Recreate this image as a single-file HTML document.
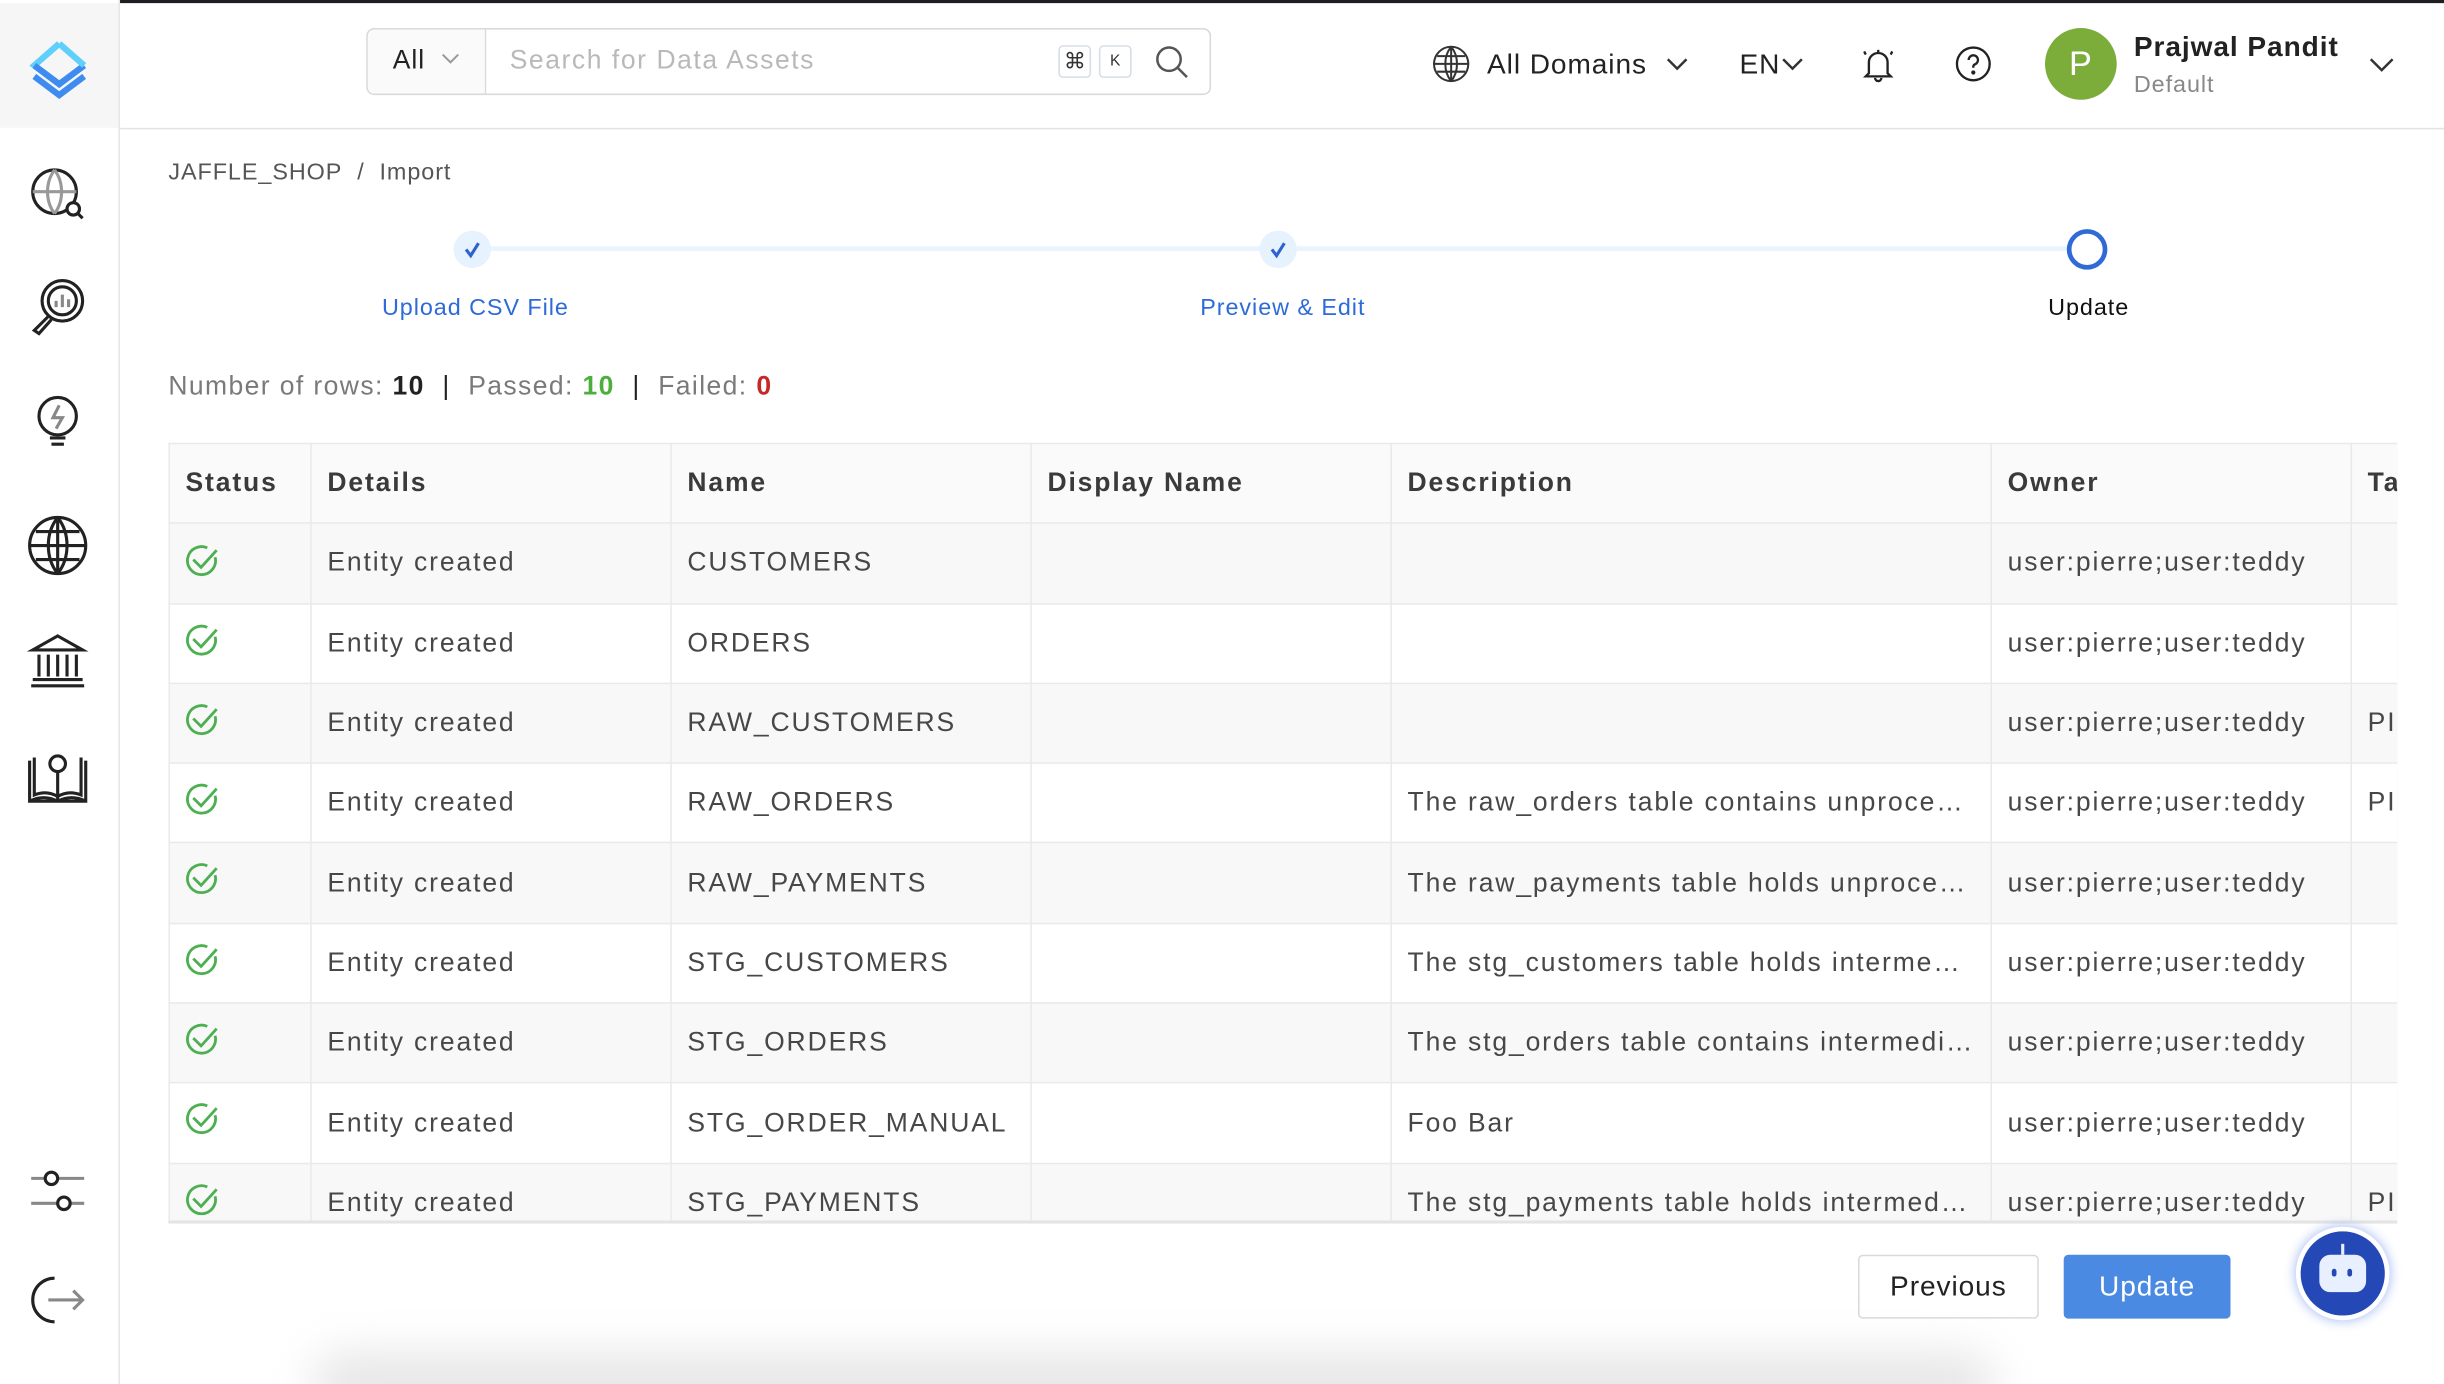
<!DOCTYPE html>
<html><head><meta charset="utf-8"><style>
*{box-sizing:border-box;margin:0;padding:0}
html,body{width:2444px;height:1384px;overflow:hidden;background:#fff;font-family:"Liberation Sans",sans-serif}
#w{position:absolute;left:0;top:0;width:1568px;height:888px;transform:scale(1.5587);transform-origin:0 0;background:#fff;overflow:hidden;letter-spacing:0.6px}
.a{position:absolute}
.sb{left:0;top:0;width:77px;height:888px;border-right:1px solid #e6e6e6;background:#fff}
.ic{position:absolute;left:17px;width:40px;height:40px}
table{border-collapse:collapse;position:absolute;left:108px;top:284px;width:1430px;table-layout:fixed;font-size:17px;color:#474747;letter-spacing:1.2px}
td,th{border:1px solid #e9e9e9;height:51.3px;padding:0 10px;white-space:nowrap;overflow:hidden;text-overflow:ellipsis;text-align:left}
td:last-child,th:last-child{text-overflow:clip}
th{font-weight:bold;color:#3a3a3a;background:#fafafa}
tr:nth-child(even) td{background:#f8f8f8}
.tw{position:absolute;left:108px;top:284px;width:1430px;height:501px;overflow:hidden;border-bottom:2px solid #e4e4e4}
td:first-child{color:transparent}
</style></head><body><div id="w">
<div class="a" style="left:0;top:0;width:1568px;height:2px;background:#1e1f23"></div>
<div class="a sb"></div>
<div class="a" style="left:0;top:2px;width:76px;height:80px;background:#f6f6f6"></div>
<svg class="a" style="left:16px;top:26px" width="44" height="40" viewBox="0 0 44 40"><path d="M22 2L6 16 22 28" fill="none" stroke="#5fd0fb" stroke-width="4"/><path d="M6 16l16 12 16-12M6 23l16 12 16-12" fill="none" stroke="#3f8cf0" stroke-width="4"/><path d="M22 2l16 14" stroke="#5fd0fb" stroke-width="4"/></svg>
<div class="a" style="left:76px;top:82px;width:1492px;height:1px;background:#e3e3e3"></div>
<svg class="ic" style="top:105px" viewBox="0 0 40 40" fill="none" stroke="#222" stroke-width="2"><circle cx="18" cy="18" r="14"/><path d="M4 18h28M18 4c-6 8-6 20 0 28M18 4c6 8 6 20 0 28" stroke="#999"/><circle cx="30" cy="29" r="4" fill="#fff"/><path d="M33 32l3 3"/></svg>
<svg class="ic" style="top:176px" viewBox="0 0 40 40" fill="none" stroke="#222" stroke-width="2"><circle cx="23" cy="17" r="13"/><circle cx="23" cy="17" r="9"/><path d="M19 21v-4M23 21v-8M27 21v-5" stroke="#888"/><path d="M14 27l-9 9 3 2 8-9"/></svg>
<svg class="ic" style="top:251px" viewBox="0 0 40 40" fill="none" stroke="#222" stroke-width="2"><circle cx="20" cy="16" r="12"/><path d="M21 9l-4 8h6l-4 7" stroke="#888"/><path d="M15 30h10M16 34h8"/></svg>
<svg class="ic" style="top:330px" viewBox="0 0 40 40" fill="none" stroke="#222" stroke-width="2"><circle cx="20" cy="20" r="18"/><path d="M2 20h36M20 2v36M6 11h28M6 29h28M20 2c-8 10-8 26 0 36M20 2c8 10 8 26 0 36"/></svg>
<svg class="ic" style="top:403px" viewBox="0 0 40 40" fill="none" stroke="#222" stroke-width="2"><path d="M4 14L20 5l16 9zM6 14h28M8 17v14M14 17v14M20 17v14M26 17v14M32 17v14M4 33h32M3 37h34"/></svg>
<svg class="ic" style="top:478px" viewBox="0 0 40 40" fill="none" stroke="#222" stroke-width="2"><path d="M2 10v26h36V10M2 36c6-3 12-3 18 0 6-3 12-3 18 0M20 12v24M5 8v24c5-2 10-2 15 1 5-3 10-3 15-1V8"/><circle cx="20" cy="12" r="5" fill="#fff"/></svg>
<svg class="ic" style="top:744px" viewBox="0 0 40 40" fill="none" stroke="#222" stroke-width="2"><path d="M3 12h9M20 12h17M3 28h17M28 28h9" stroke="#888"/><circle cx="16" cy="12" r="4"/><circle cx="24" cy="28" r="4"/></svg>
<svg class="ic" style="top:814px" viewBox="0 0 40 40" fill="none" stroke="#222" stroke-width="2"><path d="M18 6a14 14 0 1 0 0 28"/><path d="M14 20h22M30 14l6 6-6 6" stroke="#888"/></svg>
<div class="a" style="left:235px;top:18px;width:542px;height:43px;border:1px solid #d9d9d9;border-radius:5px"></div>
<div class="a" style="left:236px;top:19px;width:76px;height:41px;background:#fafafa;border-right:1px solid #d9d9d9;border-radius:5px 0 0 5px"></div>
<div class="a" style="left:252px;top:29px;font-size:17px;color:#222">All</div>
<svg class="a" style="left:283px;top:34px" width="12" height="8"><path d="M1 1l5 5 5-5" fill="none" stroke="#999" stroke-width="1.3"/></svg>
<div class="a" style="left:327px;top:29px;font-size:17px;color:#b9b9b9;letter-spacing:1px">Search for Data Assets</div>
<div class="a" style="left:679px;top:29px;width:21px;height:21px;border:1px solid #d6dde6;border-radius:3px;font-size:14px;text-align:center;line-height:19px;color:#333;letter-spacing:0">⌘</div>
<div class="a" style="left:705px;top:29px;width:21px;height:21px;border:1px solid #d6dde6;border-radius:3px;font-size:10px;text-align:center;line-height:19px;color:#333;letter-spacing:0">K</div>
<svg class="a" style="left:741px;top:29px" width="22" height="22" fill="none" stroke="#555" stroke-width="1.6"><circle cx="9" cy="9" r="7.5"/><path d="M14.5 14.5l6 6"/></svg>
<svg class="a" style="left:919px;top:29px" width="24" height="24" fill="none" stroke="#333" stroke-width="1.3"><circle cx="12" cy="12" r="11"/><path d="M1 12h22M12 1v22M3 7h18M3 17h18M12 1c-5 6-5 16 0 22M12 1c5 6 5 16 0 22"/></svg>
<div class="a" style="left:954px;top:31px;font-size:18px;color:#222">All Domains</div>
<svg class="a" style="left:1069px;top:37px" width="14" height="9"><path d="M1 1l6 6 6-6" fill="none" stroke="#333" stroke-width="1.6"/></svg>
<div class="a" style="left:1116px;top:31px;font-size:18px;color:#222">EN</div>
<svg class="a" style="left:1143px;top:37px" width="14" height="9"><path d="M1 1l6 6 6-6" fill="none" stroke="#333" stroke-width="1.6"/></svg>
<svg class="a" style="left:1193px;top:29px" width="24" height="24" fill="none" stroke="#222" stroke-width="1.5"><path d="M6 18V11a6 6 0 0 1 12 0v7l2 2H4zM10 21a2 2 0 0 0 4 0M12 3v2M4 6l-1-2M20 6l1-2"/></svg>
<svg class="a" style="left:1254px;top:29px" width="24" height="24" fill="none" stroke="#222" stroke-width="1.5"><circle cx="12" cy="12" r="10.5"/><path d="M9 9.5a3 3 0 1 1 4 2.8c-1 .4-1 1-1 2.2"/><circle cx="12" cy="17.5" r=".6" fill="#222"/></svg>
<div class="a" style="left:1312px;top:18px;width:46px;height:46px;border-radius:50%;background:#7cad3b;color:#fff;font-size:22px;text-align:center;line-height:46px">P</div>
<div class="a" style="left:1369px;top:20px;font-size:18px;color:#222;font-weight:bold">Prajwal Pandit</div>
<div class="a" style="left:1369px;top:46px;font-size:15px;color:#888">Default</div>
<svg class="a" style="left:1520px;top:37px" width="16" height="10"><path d="M1 1l7 7 7-7" fill="none" stroke="#333" stroke-width="1.6"/></svg>
<div class="a" style="left:108px;top:102px;font-size:15px;color:#555">JAFFLE_SHOP&nbsp;&nbsp;/&nbsp;&nbsp;Import</div>
<div class="a" style="left:303px;top:158px;width:1036px;height:3px;background:#e8f4fe"></div>
<div class="a" style="left:291px;top:148px;width:24px;height:24px;border-radius:50%;background:#e6f2fe"></div>
<svg class="a" style="left:297px;top:154px" width="12" height="12"><path d="M2 6l3 4 5-8" fill="none" stroke="#2c63cf" stroke-width="2"/></svg>
<div class="a" style="left:808px;top:148px;width:24px;height:24px;border-radius:50%;background:#e6f2fe"></div>
<svg class="a" style="left:814px;top:154px" width="12" height="12"><path d="M2 6l3 4 5-8" fill="none" stroke="#2c63cf" stroke-width="2"/></svg>
<div class="a" style="left:1326px;top:147px;width:26px;height:26px;border-radius:50%;background:#fff;border:3px solid #2f6ad6"></div>
<div class="a" style="left:205px;top:189px;width:200px;text-align:center;font-size:15px;color:#2c6bd8">Upload CSV File</div>
<div class="a" style="left:723px;top:189px;width:200px;text-align:center;font-size:15px;color:#2c6bd8">Preview &amp; Edit</div>
<div class="a" style="left:1240px;top:189px;width:200px;text-align:center;font-size:15px;color:#111">Update</div>
<div class="a" style="left:108px;top:238px;font-size:17px;color:#7a7a7a;letter-spacing:0.9px">Number of rows: <b style="color:#222">10</b> &nbsp;<span style="color:#222">|</span>&nbsp; Passed: <b style="color:#4caf3c">10</b> &nbsp;<span style="color:#222">|</span>&nbsp; Failed: <b style="color:#c62828">0</b></div>
<div class="tw"><table style="left:0;top:0">
<colgroup><col style="width:91px"><col style="width:231px"><col style="width:231px"><col style="width:231px"><col style="width:385px"><col style="width:231px"><col style="width:30px"></colgroup>
<tr><th>Status</th><th>Details</th><th>Name</th><th>Display Name</th><th>Description</th><th>Owner</th><th>Tags</th></tr>
<tr><td>✓</td><td>Entity created</td><td>CUSTOMERS</td><td></td><td></td><td>user:pierre;user:teddy</td><td></td></tr>
<tr><td>✓</td><td>Entity created</td><td>ORDERS</td><td></td><td></td><td>user:pierre;user:teddy</td><td></td></tr>
<tr><td>✓</td><td>Entity created</td><td>RAW_CUSTOMERS</td><td></td><td></td><td>user:pierre;user:teddy</td><td>PII</td></tr>
<tr><td>✓</td><td>Entity created</td><td>RAW_ORDERS</td><td></td><td>The raw_orders table contains unprocessed</td><td>user:pierre;user:teddy</td><td>PII</td></tr>
<tr><td>✓</td><td>Entity created</td><td>RAW_PAYMENTS</td><td></td><td>The raw_payments table holds unprocessed</td><td>user:pierre;user:teddy</td><td></td></tr>
<tr><td>✓</td><td>Entity created</td><td>STG_CUSTOMERS</td><td></td><td>The stg_customers table holds intermediate</td><td>user:pierre;user:teddy</td><td></td></tr>
<tr><td>✓</td><td>Entity created</td><td>STG_ORDERS</td><td></td><td>The stg_orders table contains intermediate</td><td>user:pierre;user:teddy</td><td></td></tr>
<tr><td>✓</td><td>Entity created</td><td>STG_ORDER_MANUAL</td><td></td><td>Foo Bar</td><td>user:pierre;user:teddy</td><td></td></tr>
<tr><td>✓</td><td>Entity created</td><td>STG_PAYMENTS</td><td></td><td>The stg_payments table holds intermediate</td><td>user:pierre;user:teddy</td><td>PII</td></tr>
</table></div>
<svg class="a" style="left:119px;top:349px" width="22" height="440" fill="none" stroke="#4caf50" stroke-width="1.8">
<g id="c"><path d="M19 8.5A9 9 0 1 1 14 2.5"/><path d="M5 10l5 5 10-11"/></g>
<use href="#c" y="51"/><use href="#c" y="102"/><use href="#c" y="153"/><use href="#c" y="204"/><use href="#c" y="256"/><use href="#c" y="307"/><use href="#c" y="358"/><use href="#c" y="410"/></svg>
<div class="a" style="left:1192px;top:805px;width:116px;height:41px;border:1px solid #d9d9d9;border-radius:3px;font-size:18px;color:#222;text-align:center;line-height:39px">Previous</div>
<div class="a" style="left:1324px;top:805px;width:107px;height:41px;background:#4a8ae2;border-radius:3px;font-size:18px;color:#fff;text-align:center;line-height:41px">Update</div>
<div class="a" style="left:1473px;top:787px;width:60px;height:60px;border-radius:50%;background:#2448b6;border:3px solid #fff;box-shadow:0 0 8px #9bb4f0"></div>
<div class="a" style="left:1488px;top:805px;width:30px;height:24px;border-radius:7px;background:#e8f0ff"></div>
<div class="a" style="left:1496px;top:814px;width:3px;height:5px;background:#2448b6;border-radius:2px"></div>
<div class="a" style="left:1506px;top:814px;width:3px;height:5px;background:#2448b6;border-radius:2px"></div>
<div class="a" style="left:1502px;top:798px;width:2px;height:7px;background:#e8f0ff"></div>
<div class="a" style="left:200px;top:868px;width:1080px;height:40px;border-radius:40px;background:#e6e6e6;filter:blur(14px)"></div>
</div></body></html>
